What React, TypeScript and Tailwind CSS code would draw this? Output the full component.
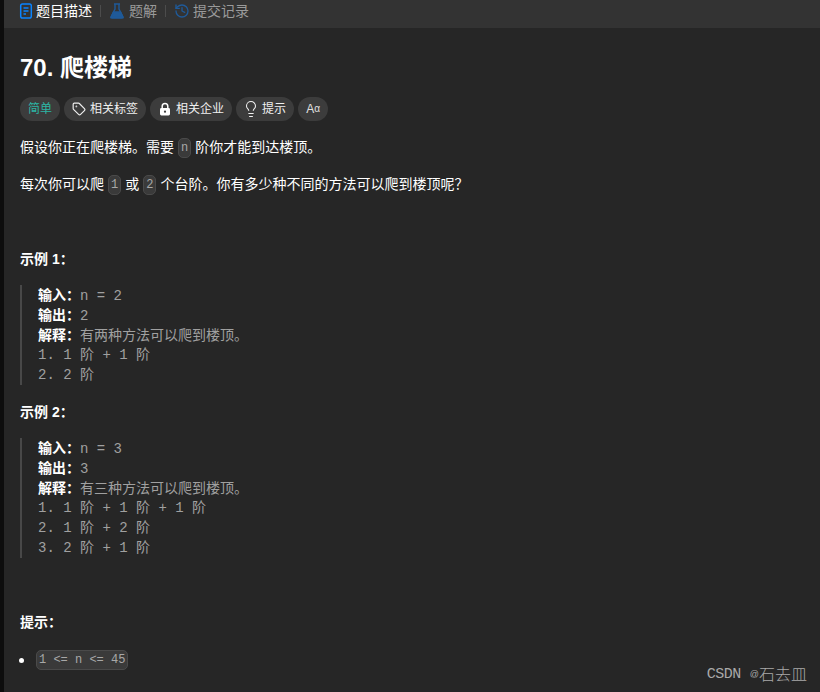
import { Lightbulb, Tag, History } from 'lucide-react';
import type { ReactNode } from 'react';

const FONT = "font-['Liberation_Sans','Noto_Sans_CJK_SC',sans-serif]";

function Pill({ icon, children }: { icon?: ReactNode; children: ReactNode }) {
  return (
    <div className="flex h-6 items-center gap-1 rounded-full bg-[#3c3c3c] px-2 text-xs text-[#f0f0f0]">
      {icon}
      <span>{children}</span>
    </div>
  );
}

function Code({ children }: { children: ReactNode }) {
  return (
    <code className="mx-1 inline-block h-5 rounded-[5px] border border-[#4a4a4a] bg-[#3a3a3a] px-[2px] align-middle font-['Liberation_Mono','Noto_Sans_CJK_SC',monospace] text-xs leading-[18px] text-[#a8a8a8]">
      {children}
    </code>
  );
}

function Example({ lines }: { lines: [string, string][] }) {
  return (
    <div className="ml-4 border-l-2 border-[#484848] pl-4 font-['Liberation_Mono','Noto_Sans_CJK_SC',monospace] text-[14px] leading-5 text-[#a0a0a0]">
      {lines.map(([label, text], i) => (
        <div key={i} className="h-5 whitespace-pre">
          {label && <b className={`${FONT} font-bold text-[14px] text-white`}>{label}</b>}
          {text}
        </div>
      ))}
    </div>
  );
}

export default function App() {
  return (
    <div className={`${FONT} relative flex h-[692px] w-[820px] overflow-hidden bg-[#0d0d0d]`}>
      <div className="ml-[4px] flex-1 bg-[#262626]">
        {/* tabs */}
        <div className="flex h-[28px] items-center bg-[#333333] pb-[6px] pl-[14px] text-[14px]">
          <svg width="16" height="16" viewBox="0 0 16 16" fill="none" stroke="#0a84ff" strokeWidth="1.5">
            <rect x="2.7" y="1" width="10.6" height="14" rx="1.8" />
            <path d="M5.5 5h5M5.5 8h5M5.5 11h2.5" />
          </svg>
          <span className="ml-[2px] text-white">题目描述</span>
          <div className="mx-[8px] h-3 w-px bg-[#4c4c4c]" />
          <svg width="16" height="16" viewBox="0 0 16 16" fill="none" stroke="#1f5a99" strokeWidth="1.4">
            <path d="M5 1h6M6 1v5L2 14a1 1 0 0 0 1 1h10a1 1 0 0 0 1-1L10 6V1" />
            <path d="M4.5 9h7l2.5 5.5H2z" fill="#1f5a99" />
          </svg>
          <span className="ml-1 text-[#9a9a9a]">题解</span>
          <div className="mx-[8px] h-3 w-px bg-[#4c4c4c]" />
          <History size={16} strokeWidth={2} className="text-[#1f5a99]" />
          <span className="ml-[3px] text-[#9a9a9a]">提交记录</span>
        </div>

        <div className="pl-[16px]">
          <h1 className="mt-[24px] text-[24px] font-bold leading-8 text-white">70. 爬楼梯</h1>

          <div className="mt-[13px] flex gap-1">
            <div className="flex h-6 w-10 items-center justify-center rounded-full bg-[#3c3c3c] text-xs text-[#2db5a5]">简单</div>
            <Pill icon={<Tag size={14} />}>相关标签</Pill>
            <Pill
              icon={
                <svg width="14" height="14" viewBox="0 0 14 14" fill="none">
                  <path d="M4.2 6.5V4.2a2.8 2.8 0 0 1 5.6 0v2.3" stroke="white" strokeWidth="1.5" />
                  <rect x="2" y="6" width="10" height="7.5" rx="1.4" fill="white" />
                  <circle cx="7" cy="9.7" r="1.1" fill="#3c3c3c" />
                </svg>
              }
            >
              相关企业
            </Pill>
            <Pill icon={<Lightbulb size={18} strokeWidth={1.4} className="-mx-[2px]" />}>提示</Pill>
            <div className="flex h-6 w-[30px] items-center justify-center rounded-full bg-[#3c3c3c] text-xs text-[#e0e0e0]">
              A<span className="text-[10px]">α</span>
            </div>
          </div>

          <p className="mt-[16px] h-5 text-[14px] leading-5 text-white">
            假设你正在爬楼梯。需要<Code>n</Code>阶你才能到达楼顶。
          </p>
          <p className="mt-[17px] h-5 text-[14px] leading-5 text-white">
            每次你可以爬<Code>1</Code>或<Code>2</Code>个台阶。你有多少种不同的方法可以爬到楼顶呢？
          </p>

          <p className="mt-[55px] h-5 text-[14px] font-bold leading-5 text-white">示例 1：</p>
        </div>

        <div className="mt-[16px]">
          <Example
            lines={[
              ['输入：', 'n = 2'],
              ['输出：', '2'],
              ['解释：', '有两种方法可以爬到楼顶。'],
              ['', '1. 1 阶 + 1 阶'],
              ['', '2. 2 阶'],
            ]}
          />
        </div>

        <p className="mt-[17px] h-5 pl-[16px] text-[14px] font-bold leading-5 text-white">示例 2：</p>

        <div className="mt-[16px]">
          <Example
            lines={[
              ['输入：', 'n = 3'],
              ['输出：', '3'],
              ['解释：', '有三种方法可以爬到楼顶。'],
              ['', '1. 1 阶 + 1 阶 + 1 阶'],
              ['', '2. 1 阶 + 2 阶'],
              ['', '3. 2 阶 + 1 阶'],
            ]}
          />
        </div>

        <p className="mt-[54px] h-5 pl-[16px] text-[14px] font-bold leading-5 text-white">提示：</p>

        <div className="mt-[18px] flex items-center pl-[15px]">
          <span className="h-[5px] w-[5px] rounded-full bg-white" />
          <code className="ml-[12px] h-5 rounded-[5px] border border-[#4a4a4a] bg-[#3a3a3a] px-[2px] font-['Liberation_Mono',monospace] text-xs leading-[18px] text-[#a8a8a8]">
            1 &lt;= n &lt;= 45
          </code>
        </div>
      </div>

      {/* watermark */}
      <div className="absolute bottom-[5px] right-[13px] flex items-center text-[#a9a9a9]">
        <span className="font-['Liberation_Mono',monospace] text-[15px] tracking-[-0.5px]">CSDN</span>
        <span className="ml-[9px] text-[9px]">@</span>
        <span className="text-[16px] font-light">石去皿</span>
      </div>
    </div>
  );
}
